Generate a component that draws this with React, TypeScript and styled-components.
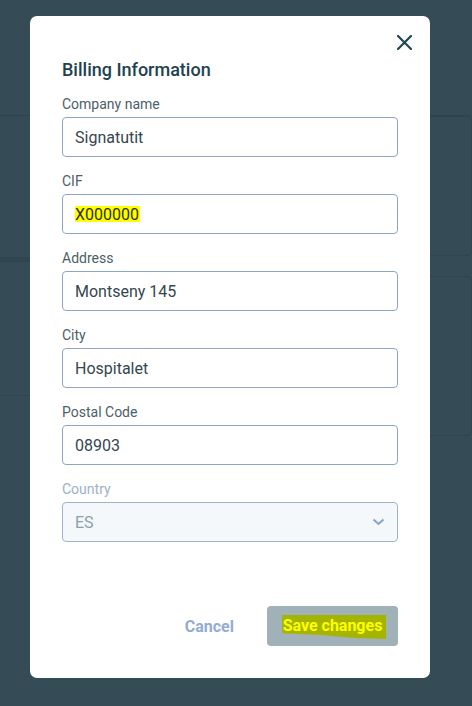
import React from 'react'
import styled, { createGlobalStyle } from 'styled-components'

const GlobalStyle = createGlobalStyle`
  html, body {
    margin: 0;
    padding: 0;
    background: #354c56;
    font-family: Roboto, "Liberation Sans", Arial, sans-serif;
  }
  * { box-sizing: border-box; }
`

const Page = styled('div')`
  width: 472px;
  height: 706px;
  overflow: hidden;
  position: relative;
  background: #354c56;
`
const Header = styled('div')`
  height: 116px;
  border-bottom: 1px solid #2f444e;
`
const Content = styled('div')`
  display: flex;
  gap: 17px;
  margin-left: -20px;
`
const MainCard = styled('div')`
  width: 473px;
  height: 280px;
  border: 1px solid #2f4650;
  border-top: none;
  border-radius: 0 0 4px 0;
  display: flex;
  flex-direction: column;
`
const CardTop = styled('div')`
  height: 146px;
  border-bottom: 5px solid #304650;
`
const SideColumn = styled('div')`
  display: flex;
  flex-direction: column;
  gap: 20px;
`
const SideCard = styled('div')`
  width: 200px;
  height: ${p => p.$h}px;
  border: 1px solid #2f4650;
  border-radius: 4px;
`

const Modal = styled('div')`
  position: absolute;
  top: 16px;
  left: 30px;
  width: 400px;
  height: 662px;
  background: #ffffff;
  border-radius: 7px;
  padding: 0 32px 32px 32px;
  display: flex;
  flex-direction: column;
`
const CloseRow = styled('div')`
  display: flex;
  justify-content: flex-end;
  padding-top: 18px;
  margin-right: -14px;
  height: 43px;
`
const CloseButton = styled('button')`
  border: none;
  background: none;
  padding: 0;
  width: 16px;
  height: 16px;
  display: flex;
  align-items: center;
  justify-content: center;
  cursor: pointer;
`
const Title = styled('h2')`
  margin: 0 0 15px 0;
  font-size: 18px;
  font-weight: 500;
  line-height: 22px;
  color: #1d4250;
`
const Form = styled('div')`
  display: flex;
  flex-direction: column;
  gap: 16px;
`
const Field = styled('div')`
  display: flex;
  flex-direction: column;
  gap: 4px;
`
const Label = styled('label')`
  font-size: 14px;
  line-height: 17px;
  color: ${p => (p.$disabled ? '#9cb1c9' : '#4b5f68')};
`
const Input = styled('div')`
  height: 40px;
  border: 1px solid ${p => (p.$disabled ? '#9fb3cf' : '#8fa5c5')};
  border-radius: 4px;
  background: ${p => (p.$disabled ? '#f4f8fb' : '#ffffff')};
  padding: 0 12px 0 12px;
  display: flex;
  align-items: center;
  justify-content: space-between;
  font-size: 16px;
  color: ${p => (p.$disabled ? '#8d9fa8' : '#34464e')};
`
const Marker = styled('span')`
  background: #ffff00;
  color: #2c3300;
  padding: 1px 1px 0 0;
  line-height: 15px;
`
const Footer = styled('div')`
  margin-top: auto;
  display: flex;
  justify-content: flex-end;
  align-items: center;
  gap: 17px;
`
const CancelButton = styled('button')`
  border: none;
  background: none;
  font-family: inherit;
  font-size: 16px;
  font-weight: 700;
  color: #93acd0;
  padding: 0 16px;
  height: 40px;
  cursor: pointer;
`
const SaveButton = styled('button')`
  border: none;
  background: #a0b1b7;
  border-radius: 4px;
  width: 131px;
  height: 40px;
  padding: 0;
  display: flex;
  align-items: center;
  justify-content: center;
  font-family: inherit;
  font-size: 16px;
  font-weight: 700;
  cursor: pointer;
`
const SaveMarker = styled('span')`
  background: #a4b400;
  color: #ffff00;
  padding: 4px 4px 6px 1px;
  margin-left: 3px;
  margin-top: 2px;
  line-height: 14px;
  clip-path: polygon(0 0, 100% 0, 100% 100%, 70% 96%, 35% 82%, 0 76%);
`

const fields = [
  { label: 'Company name', value: 'Signatutit' },
  { label: 'CIF', value: 'X000000', marked: true },
  { label: 'Address', value: 'Montseny 145' },
  { label: 'City', value: 'Hospitalet' },
  { label: 'Postal Code', value: '08903' },
]

const App = () => {
  return (
    <Page>
      <GlobalStyle />
      <Header />
      <Content>
        <MainCard>
          <CardTop />
        </MainCard>
        <SideColumn>
          <SideCard $h={140} />
          <SideCard $h={160} />
        </SideColumn>
      </Content>

      <Modal>
        <CloseRow>
          <CloseButton aria-label="close">
            <svg width="15" height="15" viewBox="0 0 15 15">
              <path d="M1 1 L14 14 M14 1 L1 14" stroke="#1f4654" strokeWidth="2.2" strokeLinecap="square" />
            </svg>
          </CloseButton>
        </CloseRow>
        <Title>Billing Information</Title>
        <Form>
          {fields.map(f => (
            <Field key={f.label}>
              <Label>{f.label}</Label>
              <Input>{f.marked ? <Marker>{f.value}</Marker> : f.value}</Input>
            </Field>
          ))}
          <Field>
            <Label $disabled>Country</Label>
            <Input $disabled>
              ES
              <svg width="13" height="8" viewBox="0 0 13 8">
                <path d="M1.5 1.5 L6.5 6 L11.5 1.5" stroke="#86a3c6" strokeWidth="2" fill="none" />
              </svg>
            </Input>
          </Field>
        </Form>
        <Footer>
          <CancelButton>Cancel</CancelButton>
          <SaveButton>
            <SaveMarker>Save changes</SaveMarker>
          </SaveButton>
        </Footer>
      </Modal>
    </Page>
  )
}

export default App
